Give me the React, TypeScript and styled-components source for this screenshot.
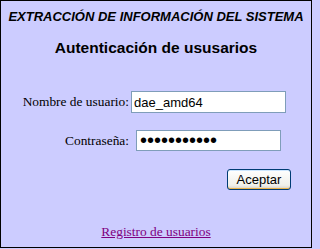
import React from 'react';
import styled, { createGlobalStyle } from 'styled-components';

const GlobalStyle = createGlobalStyle`
  html, body {
    margin: 0;
    padding: 0;
    background: #ccccff;
  }
`;

const Panel = styled.div`
  box-sizing: border-box;
  width: 312px;
  height: 248px;
  border: 1px solid #000;
  background: #ccccff;
  display: flex;
  flex-direction: column;
  align-items: center;
  padding-top: 8px;
`;

const SystemTitle = styled.div`
  font-family: 'Liberation Sans', Arial, sans-serif;
  font-size: 13px;
  line-height: 15px;
  font-weight: bold;
  font-style: italic;
  color: #000;
  white-space: nowrap;
`;

const Heading = styled.h1`
  margin: 15px 0 0;
  font-family: 'Liberation Sans', Arial, sans-serif;
  font-size: 15.5px;
  line-height: 18px;
  font-weight: bold;
  color: #000;
`;

const Form = styled.form`
  align-self: stretch;
  display: grid;
  grid-template-columns: 128px 1fr;
  row-gap: 17px;
  margin-top: 34px;
  align-items: center;
`;

const Label = styled.label`
  font-family: 'Liberation Serif', 'Times New Roman', serif;
  font-size: 13.4px;
  color: #000;
  text-align: right;
  white-space: nowrap;
`;

const TextInput = styled.input<{ $offset: number; $width: number; $height: number }>`
  box-sizing: border-box;
  margin: 0 0 0 ${p => p.$offset}px;
  width: ${p => p.$width}px;
  height: ${p => p.$height}px;
  padding: 0 2px;
  border: 1px solid #7f9db9;
  background: #fff;
  font-family: 'Liberation Sans', Arial, sans-serif;
  font-size: 13px;
  color: #000;
  outline: none;
`;

const PasswordInput = styled(TextInput)`
  padding: 0 0 0 3px;
  font-size: 20px;
  letter-spacing: 0;
`;

const ButtonRow = styled.div`
  grid-column: 1 / span 2;
  display: flex;
  justify-content: flex-end;
  padding-right: 20px;
  margin-top: 1px;
`;

const Button = styled.button`
  box-sizing: border-box;
  width: 64px;
  height: 21px;
  padding: 0;
  border: 1px solid #003c74;
  border-radius: 3px;
  background: linear-gradient(#ffffff, #f0f0ea 80%, #d6d0c5);
  box-shadow: inset 0 -1px 0 #e9b24c, inset 0 1px 0 #cee7ff;
  font-family: 'Liberation Sans', Arial, sans-serif;
  font-size: 13px;
  color: #000;
`;

const Footer = styled.div`
  margin-top: auto;
  padding-bottom: 7px;
  font-family: 'Liberation Serif', 'Times New Roman', serif;
  font-size: 13.4px;
`;

const RegisterLink = styled.a`
  color: #800080;
  text-decoration: underline;
`;

export default function App() {
  return (
    <>
      <GlobalStyle />
      <Panel>
        <SystemTitle>EXTRACCIÓN DE INFORMACIÓN DEL SISTEMA</SystemTitle>
        <Heading>Autenticación de ususarios</Heading>
        <Form onSubmit={e => e.preventDefault()}>
          <Label htmlFor="user">Nombre de usuario:</Label>
          <TextInput id="user" type="text" defaultValue="dae_amd64" $offset={2} $width={155} $height={22} />
          <Label htmlFor="pass">Contraseña:</Label>
          <PasswordInput id="pass" type="password" defaultValue="dae_amd6412" $offset={7} $width={145} $height={21} />
          <ButtonRow>
            <Button type="submit">Aceptar</Button>
          </ButtonRow>
        </Form>
        <Footer>
          <RegisterLink href="#registro">Registro de usuarios</RegisterLink>
        </Footer>
      </Panel>
    </>
  );
}
